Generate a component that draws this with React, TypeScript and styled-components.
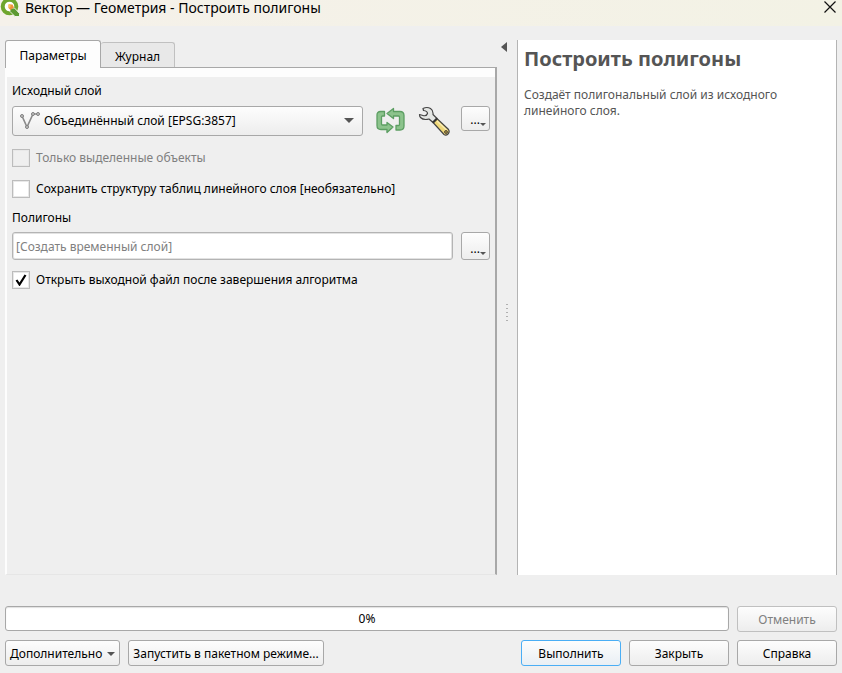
import React from "react";
import styled, { createGlobalStyle } from "styled-components";

const GlobalStyle = createGlobalStyle`
  *, *::before, *::after { box-sizing: border-box; }
  body {
    margin: 0;
    background: #efefef;
    color: #000;
    font: 12px/16px "Noto Sans", "Open Sans", sans-serif;
  }
  button, input, select { font: inherit; color: inherit; margin: 0; }
`;

const Dialog = styled.div`
  display: flex;
  flex-direction: column;
  min-height: 100vh;
`;

const TitleBar = styled.header`
  display: flex;
  align-items: flex-start;
  height: 26px;
  padding-right: 5px;
  background: linear-gradient(90deg, #f5f1ea, #f3f2e5);
`;

const Title = styled.h1`
  flex: 1;
  margin: 0 0 0 5px;
  font-size: 14px;
  font-weight: 400;
  line-height: 16px;
`;

const CloseButton = styled.button`
  display: flex;
  padding: 0;
  border: 0;
  background: none;
`;

const Body = styled.div`
  flex: 1;
  display: flex;
  padding: 14px 5px 0;
`;

const TabArea = styled.main`
  flex: 3 3 492px;
  min-width: 0;
  display: flex;
  flex-direction: column;
`;

const Tabs = styled.div`
  display: flex;
  align-items: flex-end;
  height: 27px;
`;

const Tab = styled.button<{ $active?: boolean }>`
  position: relative;
  height: ${(p) => (p.$active ? 28 : 25)}px;
  width: ${(p) => (p.$active ? 96 : 74)}px;
  margin-bottom: ${(p) => (p.$active ? -1 : 0)}px;
  padding: ${(p) => (p.$active ? 2 : 3)}px 0 0;
  border: 1px solid ${(p) => (p.$active ? "#a8a8a8" : "#c0c0c0")};
  border-bottom: 0;
  border-left-width: ${(p) => (p.$active ? 1 : 0)}px;
  border-radius: 3px 3px 0 0;
  background: ${(p) => (p.$active ? "#fdfdfd" : "#e8e8e8")};
`;

const Panel = styled.section`
  flex: 1;
  padding: 15px 5px 0 5px;
  border-top: 1px solid #a8a8a8;
  border-right: 2px solid #a8a8a8;
  border-left: 2px solid #fdfdfd;
  border-bottom: 1px solid #e6e6e6;
  background: linear-gradient(#fdfdfd, #fdfdfd) 0 0 / 100% 9px no-repeat;
`;

const FieldLabel = styled.label`
  display: block;
`;

const OutputLabel = styled(FieldLabel)`
  margin-top: 6px;
`;

const Row = styled.div`
  display: flex;
  align-items: flex-start;
`;

const InputRow = styled(Row)`
  gap: 8px;
  margin: 6px 0 4px;
`;

const LayerRow = styled(Row)`
  height: 30px;
  margin: 7px 0 6px;
`;

const SelectBox = styled.div`
  flex: 1;
  position: relative;
  min-width: 0;
`;

const LayerSelect = styled.select`
  appearance: none;
  display: block;
  width: 100%;
  height: 30px;
  padding: 0 30px 0 31px;
  border: 1px solid #a8a8a8;
  border-radius: 3px;
  background: linear-gradient(#fdfdfd, #ededed);
`;

const LayerIcon = styled.svg`
  position: absolute;
  left: 7px;
  top: 4px;
  pointer-events: none;
`;

const SelectArrow = styled.svg`
  position: absolute;
  right: 9px;
  top: 12px;
  pointer-events: none;
`;

const ToolButton = styled.button`
  display: flex;
  flex: none;
  margin-left: 12px;
  padding: 0;
  border: 0;
  background: none;
`;

const BrowseButton = styled.button<{ $tall?: boolean }>`
  flex: none;
  display: flex;
  align-items: flex-end;
  justify-content: flex-end;
  width: 29px;
  height: ${(p) => (p.$tall ? 28 : 25)}px;
  padding: 0 3px 4px;
  border: 1px solid #a8a8a8;
  border-radius: 3px;
  line-height: 12px;
  background: linear-gradient(#fdfdfd, #ededed);
`;

const LayerBrowse = styled(BrowseButton)`
  margin-left: 10px;
`;

const PathInput = styled.input`
  flex: 1;
  min-width: 0;
  height: 28px;
  padding: 0 3px;
  border: 1px solid #b4b4b4;
  border-radius: 3px;
  background: #fff;
  box-shadow: inset 0 0 0 1px #e2e2e2;
  &::placeholder { color: #808080; opacity: 1; }
`;

const CheckRow = styled.label<{ $disabled?: boolean }>`
  display: flex;
  align-items: center;
  gap: 6px;
  height: 31px;
  color: ${(p) => (p.$disabled ? "#808080" : "#000")};
`;

const CheckMark = styled.span`
  position: relative;
  display: flex;
`;

const CheckInput = styled.input`
  appearance: none;
  width: 18px;
  height: 18px;
  border: 1px solid #bcbcbc;
  background: #fff;
  box-shadow: inset 0 0 0 1px #e8e8e8;
  &:disabled { background: #efefef; }
  & + svg { display: none; }
  &:checked + svg { display: block; }
`;

const TickIcon = styled.svg`
  position: absolute;
  left: 3px;
  top: 3px;
  pointer-events: none;
`;

const Splitter = styled.div`
  flex: none;
  width: 20px;
  display: flex;
  flex-direction: column;
  align-items: center;
`;

const CollapseButton = styled.button`
  display: flex;
  align-self: flex-start;
  margin: 2px 0 0 4px;
  padding: 0;
  border: 0;
  background: none;
`;

const Grip = styled.svg`
  margin: auto 0;
`;

const HelpPanel = styled.aside`
  flex: 2 2 320px;
  min-width: 0;
  padding: 7px 6px;
  border: solid #b4b4b4;
  border-width: 0 1px;
  background: #fff;
  color: #555;
`;

const HelpTitle = styled.h2`
  margin: 0 0 16px;
  font-size: 20px;
  line-height: 24px;
  font-weight: 700;
`;

const HelpText = styled.p`
  margin: 0;
  max-width: 290px;
`;

const Footer = styled.footer`
  display: flex;
  flex-direction: column;
  gap: 8px;
  padding: 31px 5px 7px;
`;

const FooterRow = styled.div`
  display: flex;
  gap: 8px;
`;

const Progress = styled.div`
  flex: 1;
  display: flex;
  align-items: center;
  justify-content: center;
  height: 25px;
  border: 1px solid #a8a8a8;
  border-radius: 3px;
  background: #fff;
  box-shadow: inset 0 1px 1px #e0e0e0;
`;

const PushButton = styled.button<{ $primary?: boolean }>`
  width: 100px;
  height: 26px;
  padding: 1px 0 0;
  border: 1px solid ${(p) => (p.$primary ? "#4aaef5" : "#a8a8a8")};
  border-radius: 3px;
  background: ${(p) =>
    p.$primary ? "linear-gradient(#fdfdfd, #e9eff4)" : "linear-gradient(#fdfdfd, #ededed)"};
  &:disabled { color: #808080; border-color: #c0c0c0; }
`;

const WideButton = styled(PushButton)`
  width: auto;
  padding: 1px 4px 0;
`;

const MenuButton = styled(WideButton)`
  display: flex;
  align-items: center;
  gap: 5px;
`;

const Spacer = styled.div`
  flex: 1;
`;

const Arrow = ({ w, h }: { w: number; h: number }) => (
  <svg width={w} height={h} viewBox="0 0 10 5" preserveAspectRatio="none" aria-hidden="true">
    <path d="M0 0H10L5 5Z" fill="#555" />
  </svg>
);

const Tick = () => (
  <TickIcon width="12" height="12" viewBox="0 0 12 12" aria-hidden="true">
    <path d="M1.500 6l3 4.500 6-9.500" fill="none" stroke="#000" strokeWidth="2.200" />
  </TickIcon>
);

const Logo = () => (
  <svg width="20" height="17" viewBox="0 0 20 17" aria-hidden="true">
    <circle cx="9.500" cy="6.500" r="6.800" fill="#fff" stroke="#6fa62e" strokeWidth="4" />
    <path d="M10 8h4.500l5 5.500v3h-4.500L10 11.500z" fill="#5d9a33" stroke="#fff" strokeWidth=".8" />
    <path d="M8.500 4.500h4l1.500 3-3.500 2.500-2-2z" fill="#f0913a" />
    <path d="M8.500 4.500l2-.5v3l-2 1z" fill="#f6c75a" />
  </svg>
);

const Iterate = () => (
  <svg width="31" height="28" viewBox="0 0 31 28" aria-hidden="true">
    <g fill="#8cc38c" stroke="#5c9e62" strokeWidth="1.300" strokeLinejoin="round">
      <path d="M9.500 5.500H5.500Q2 5.500 2 9V19.500Q2 23.500 6 23.500H12V26.500L18 21 12 16.500V19H7.500Q6.500 19 6.500 18V11Q6.500 10 7.500 10H9.500Z" />
      <path d="M21 24H25Q29 24 29 20V9.500Q29 5.500 25 5.500H18.500V2.500L12 7.500 18.500 12.500V10H23.500Q24.500 10 24.500 11V18.500Q24.500 19.500 23.500 19.500H21Z" />
    </g>
  </svg>
);

const Wrench = () => (
  <svg width="33" height="30" viewBox="0 0 33 30" aria-hidden="true">
    <path d="M15 16.500l4-4L30.500 23.500q1.500 2.500-.5 4.500t-4 .5z" fill="#f0d878" stroke="#444" strokeWidth="1.200" />
    <path d="M19 15l9.500 9" stroke="#f9ecb4" strokeWidth="1.300" />
    <circle cx="28" cy="26" r="1.400" fill="#c9a33c" stroke="#333" strokeWidth=".9" />
    <path
      d="M5 2.500Q9 .5 12.500 2.500 15.500 4.500 15 8.500L19 12.500 15 16.500 11 13Q5.500 14.500 2.500 11.500 1.500 10.500 1.500 8.500L5 9.500Q8.500 10.500 9.500 7.500 9.500 5 5.500 4.500z"
      fill="#e4e6e4" stroke="#444" strokeWidth="1.200" strokeLinejoin="round"
    />
    <path d="M15 16.500l4-4" stroke="#333" strokeWidth="2.200" />
  </svg>
);

export default function App() {
  return (
    <Dialog>
      <GlobalStyle />
      <TitleBar>
        <Logo />
        <Title>Вектор — Геометрия - Построить полигоны</Title>
        <CloseButton aria-label="Закрыть окно">
          <svg width="14" height="14" viewBox="0 0 14 14" aria-hidden="true">
            <path d="M1.500 1.500l11 11M12.500 1.500l-11 11" stroke="#111" strokeWidth="1.200" />
          </svg>
        </CloseButton>
      </TitleBar>
      <Body>
        <TabArea>
          <Tabs role="tablist">
            <Tab role="tab" aria-selected="true" $active>Параметры</Tab>
            <Tab role="tab" aria-selected="false">Журнал</Tab>
          </Tabs>
          <Panel role="tabpanel">
            <FieldLabel htmlFor="layer">Исходный слой</FieldLabel>
            <LayerRow>
              <SelectBox>
                <LayerSelect id="layer">
                  <option>Объединённый слой [EPSG:3857]</option>
                </LayerSelect>
                <LayerIcon width="22" height="20" viewBox="0 0 22 20" aria-hidden="true">
                  <path d="M3 6l5 11 6-13h5" fill="none" stroke="#8a8a8a" strokeWidth="1.600" />
                  <g fill="#c4c4c4" stroke="#808080">
                    <circle cx="3" cy="6" r="1.500" />
                    <circle cx="8" cy="17" r="1.500" />
                    <circle cx="14" cy="4" r="1.500" />
                    <circle cx="19" cy="4" r="1.500" />
                  </g>
                </LayerIcon>
                <SelectArrow width="10" height="5" viewBox="0 0 10 5" aria-hidden="true">
                  <path d="M0 0H10L5 5Z" fill="#555" />
                </SelectArrow>
              </SelectBox>
              <ToolButton aria-label="Перебор объектов"><Iterate /></ToolButton>
              <ToolButton aria-label="Параметры слоя"><Wrench /></ToolButton>
              <LayerBrowse aria-label="Выбрать слой">...<Arrow w={6} h={3} /></LayerBrowse>
            </LayerRow>
            <CheckRow $disabled>
              <CheckMark><CheckInput type="checkbox" disabled /></CheckMark>
              Только выделенные объекты
            </CheckRow>
            <CheckRow>
              <CheckMark><CheckInput type="checkbox" /><Tick /></CheckMark>
              Сохранить структуру таблиц линейного слоя [необязательно]
            </CheckRow>
            <OutputLabel htmlFor="output">Полигоны</OutputLabel>
            <InputRow>
              <PathInput id="output" placeholder="[Создать временный слой]" />
              <BrowseButton $tall aria-label="Выбрать файл">...<Arrow w={6} h={3} /></BrowseButton>
            </InputRow>
            <CheckRow>
              <CheckMark><CheckInput type="checkbox" defaultChecked /><Tick /></CheckMark>
              Открыть выходной файл после завершения алгоритма
            </CheckRow>
          </Panel>
        </TabArea>
        <Splitter>
          <CollapseButton aria-label="Свернуть справку">
            <svg width="6" height="10" viewBox="0 0 6 10" aria-hidden="true"><path d="M6 0v10L0 5z" fill="#555" /></svg>
          </CollapseButton>
          <Grip width="2" height="22" viewBox="0 0 2 22" aria-hidden="true">
            <path d="M1 1v20" stroke="#b0b0b0" strokeWidth="2" strokeDasharray="1 3" />
          </Grip>
        </Splitter>
        <HelpPanel>
          <HelpTitle>Построить полигоны</HelpTitle>
          <HelpText>Создаёт полигональный слой из исходного линейного слоя.</HelpText>
        </HelpPanel>
      </Body>
      <Footer>
        <FooterRow>
          <Progress role="progressbar" aria-valuenow={0} aria-valuemin={0} aria-valuemax={100}>0%</Progress>
          <PushButton disabled>Отменить</PushButton>
        </FooterRow>
        <FooterRow>
          <MenuButton>Дополнительно <Arrow w={8} h={4} /></MenuButton>
          <WideButton>Запустить в пакетном режиме...</WideButton>
          <Spacer />
          <PushButton $primary>Выполнить</PushButton>
          <PushButton>Закрыть</PushButton>
          <PushButton>Справка</PushButton>
        </FooterRow>
      </Footer>
    </Dialog>
  );
}
